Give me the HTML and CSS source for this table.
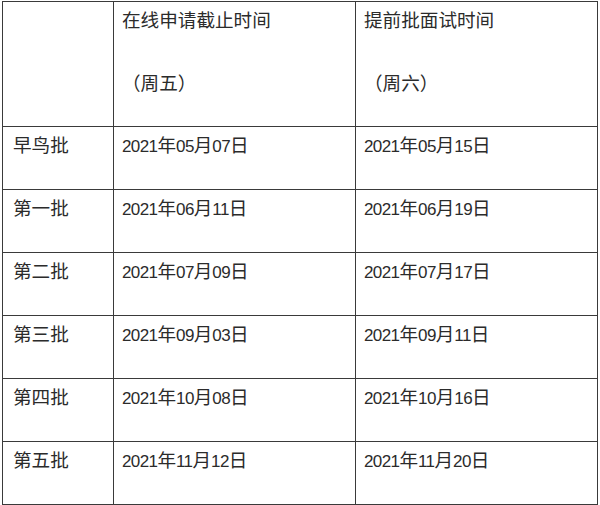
FILE: index.html
```html
<!DOCTYPE html>
<html lang="zh">
<head>
<meta charset="utf-8">
<link rel="stylesheet" href="styles.css">
</head>
<body>
<table class="sched">
  <colgroup>
    <col class="c1"><col class="c2"><col class="c3">
  </colgroup>
  <tr class="head">
    <td></td>
    <td><div>在线申请截止时间</div><div class="sub">（周五）</div></td>
    <td><div>提前批面试时间</div><div class="sub">（周六）</div></td>
  </tr>
  <tr>
    <td>早鸟批</td>
    <td><span class="n">2021</span>年<span class="n">05</span>月<span class="n">07</span>日</td>
    <td><span class="n">2021</span>年<span class="n">05</span>月<span class="n">15</span>日</td>
  </tr>
  <tr>
    <td>第一批</td>
    <td><span class="n">2021</span>年<span class="n">06</span>月<span class="n">11</span>日</td>
    <td><span class="n">2021</span>年<span class="n">06</span>月<span class="n">19</span>日</td>
  </tr>
  <tr>
    <td>第二批</td>
    <td><span class="n">2021</span>年<span class="n">07</span>月<span class="n">09</span>日</td>
    <td><span class="n">2021</span>年<span class="n">07</span>月<span class="n">17</span>日</td>
  </tr>
  <tr>
    <td>第三批</td>
    <td><span class="n">2021</span>年<span class="n">09</span>月<span class="n">03</span>日</td>
    <td><span class="n">2021</span>年<span class="n">09</span>月<span class="n">11</span>日</td>
  </tr>
  <tr>
    <td>第四批</td>
    <td><span class="n">2021</span>年<span class="n">10</span>月<span class="n">08</span>日</td>
    <td><span class="n">2021</span>年<span class="n">10</span>月<span class="n">16</span>日</td>
  </tr>
  <tr>
    <td>第五批</td>
    <td><span class="n">2021</span>年<span class="n">11</span>月<span class="n">12</span>日</td>
    <td><span class="n">2021</span>年<span class="n">11</span>月<span class="n">20</span>日</td>
  </tr>
</table>
</body>
</html>
```
FILE: styles.css
```css
html, body {
  margin: 0;
  padding: 0;
  background: #ffffff;
}
body {
  padding: 1px 0 0 2px;
  font-family: "Noto Sans CJK SC", "Noto Sans", sans-serif;
  color: #2b2b2b;
}
.sched {
  border-collapse: collapse;
  table-layout: fixed;
  width: 595px;
  font-size: 18.6px;
}
.c1 { width: 111px; }
.c2 { width: 242px; }
.c3 { width: 242px; }
.sched td {
  border: 1px solid #3a3a3a;
  vertical-align: top;
  padding: 4px 8px 0 8px;
  line-height: 25px;
  height: 58px;
  white-space: nowrap;
}
.sched tr td:first-child {
  padding-left: 10px;
}
.sched .head td {
  height: 120px;
}
.sub {
  margin-top: 38px;
}
.n {
  font-family: "Liberation Sans", sans-serif;
  font-size: 17px;
  letter-spacing: -0.6px;
}
```
